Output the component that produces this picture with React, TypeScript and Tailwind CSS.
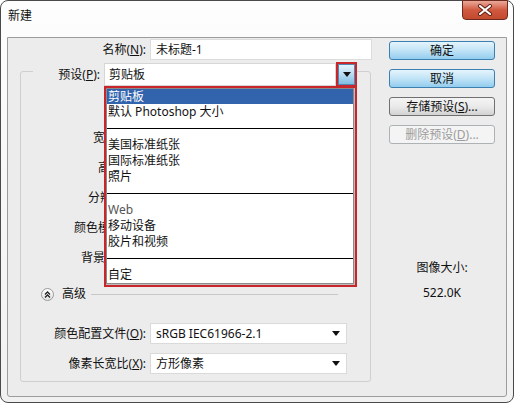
import React from "react";

const Tri = () => (
  <svg width="8" height="5" viewBox="0 0 8 5" className="block">
    <path d="M0 0 H8 L4 5 Z" fill="#111" />
  </svg>
);

const Sel = ({ text, w }: { text: string; w: string }) => (
  <div className={`${w} h-[21px] bg-white border border-[#dadada] flex items-center pl-[5px] pr-[6px]`}>
    <span className="flex-1">{text}</span>
    <Tri />
  </div>
);

const Sep = () => (
  <div className="h-[17px] flex items-center">
    <div className="w-full h-px bg-black" />
  </div>
);

const hidden = [
  { t: "宽度(W):", pl: "pl-[72px]" },
  { t: "高度(H):", pl: "pl-[77px]" },
  { t: "分辨率(R):", pl: "pl-[67px]" },
  { t: "颜色模式(M):", pl: "pl-[53px]" },
  { t: "背景内容(C):", pl: "pl-[60px]" },
];

export default function App() {
  return (
    <div className="w-[515px] h-[404px] bg-white font-['Noto_Sans','Noto_Sans_CJK_SC',sans-serif] text-[12px] leading-[16px] text-[#111]">
      <div className="w-[514px] h-[403px] rounded-[8px] border border-[#4a4a4a] bg-gradient-to-b from-[#fdfdfd] to-[#f1f1f1] flex flex-col">
        {/* title bar */}
        <div className="h-[36px] flex items-start">
          <div className="pl-[7px] pt-[7px] text-[12px]">新建</div>
          <div className="ml-auto mr-[5px] -mt-px w-[46px] h-[20px] rounded-b-[4px] border border-[#6e2a1e] bg-gradient-to-b from-[#e9a89a] via-[#d0583f] to-[#c24a2e] flex items-center justify-center">
            <svg width="16" height="12" viewBox="0 0 16 12">
              <path d="M3 2 L13 10 M13 2 L3 10" stroke="#5a1b10" strokeWidth="4" strokeLinecap="round" />
              <path d="M3 2 L13 10 M13 2 L3 10" stroke="#ffffff" strokeWidth="2.2" strokeLinecap="round" />
            </svg>
          </div>
        </div>
        {/* client */}
        <div className="mx-[6px] h-[360px] border border-[#9c9c9c] rounded-b-[3px] bg-[#ececec] flex">
          {/* left */}
          <div className="w-[381px] flex flex-col">
            <div className="mt-[1px] h-[21px] flex items-center">
              <div className="w-[138px] text-right">
                名称(<span className="underline">N</span>):
              </div>
              <div className="ml-[4px] w-[222px] h-[21px] bg-white border border-[#dcdcdc] flex items-center pl-[5px]">
                未标题-1
              </div>
            </div>
            {/* group box */}
            <div className="ml-[12px] mt-[11px] w-[351px] h-[311px] border border-[#cfcfcf] rounded-[3px] flex flex-col">
              <div className="-mt-[9px] ml-[12px] w-[324px] h-[23px] bg-[#ececec] flex items-center">
                <div className="w-[67px] text-right">
                  预设(<span className="underline">P</span>):
                </div>
                <div className="ml-[4px] relative w-[253px] h-[23px] flex">
                  <div className="w-[232px] h-[23px] bg-white border border-[#d6d6d6] flex items-center pl-[4px]">
                    剪贴板
                  </div>
                  <div className="w-[21px] h-[25px] -mt-px border-2 border-[#c8262a] flex">
                    <div className="flex-1 bg-gradient-to-b from-[#e3f2fb] via-[#b7dcf1] to-[#7fbde2] border border-[#4f89b3] flex items-center justify-center">
                      <Tri />
                    </div>
                  </div>
                  {/* popup list */}
                  <div className="absolute z-10 left-0 top-[23px] w-[253px] border-2 border-[#c8262a] bg-[#bdbdbd] pr-px pb-px">
                    <div className="bg-white border border-[#8a8a8a] flex flex-col">
                      <div className="h-[15px] bg-[#3264ad] text-white pl-[1px] flex items-center">剪贴板</div>
                      <div className="h-[16px] pl-[1px] flex items-center">默认 Photoshop 大小</div>
                      <Sep />
                      <div className="h-[16px] pl-[1px] flex items-center">美国标准纸张</div>
                      <div className="h-[16px] pl-[1px] flex items-center">国际标准纸张</div>
                      <div className="h-[16px] pl-[1px] flex items-center">照片</div>
                      <Sep />
                      <div className="h-[16px] pl-[1px] flex items-center text-[#555]">Web</div>
                      <div className="h-[16px] pl-[1px] flex items-center">移动设备</div>
                      <div className="h-[16px] pl-[1px] flex items-center">胶片和视频</div>
                      <Sep />
                      <div className="h-[16px] pl-[1px] flex items-center">自定</div>
                    </div>
                  </div>
                </div>
              </div>
              {/* hidden rows */}
              <div className="mt-[37px] flex flex-col">
                {hidden.map((r) => (
                  <div key={r.t} className={`h-[30px] flex items-center ${r.pl}`}>
                    <div>{r.t}</div>
                  </div>
                ))}
              </div>
              {/* advanced */}
              <div className="mt-[14px] h-[14px] flex items-center">
                <div className="ml-[20px] w-[13px] h-[13px] rounded-full border border-[#9a9a9a] bg-gradient-to-b from-white to-[#e2e2e2] flex items-center justify-center">
                  <svg width="7" height="7" viewBox="0 0 7 7">
                    <path d="M1 3.5 L3.5 1 L6 3.5 M1 6.5 L3.5 4 L6 6.5" stroke="#222" strokeWidth="1.3" fill="none" />
                  </svg>
                </div>
                <div className="ml-[8px]">高级</div>
                <div className="ml-[5px] w-[247px] h-px bg-[#c8c8c8]" />
              </div>
              <div className="mt-[22px] h-[21px] flex items-center">
                <div className="w-[125px] text-right">
                  颜色配置文件(<span className="underline">O</span>):
                </div>
                <div className="ml-[4px]">
                  <Sel text="sRGB IEC61966-2.1" w="w-[197px]" />
                </div>
              </div>
              <div className="mt-[9px] h-[21px] flex items-center">
                <div className="w-[125px] text-right">
                  像素长宽比(<span className="underline">X</span>):
                </div>
                <div className="ml-[4px]">
                  <Sel text="方形像素" w="w-[197px]" />
                </div>
              </div>
            </div>
          </div>
          {/* right */}
          <div className="w-[106px] pt-[3px] flex flex-col">
            <div className="flex flex-col gap-[9px]">
              <div className="h-[19px] rounded-[3px] border border-[#3c7fb1] bg-gradient-to-b from-[#e6f5fd] via-[#c0e3f6] to-[#93cdee] flex items-center justify-center">确定</div>
              <div className="h-[19px] rounded-[3px] border border-[#3c7fb1] bg-gradient-to-b from-[#e6f5fd] via-[#c0e3f6] to-[#93cdee] flex items-center justify-center">取消</div>
              <div className="h-[19px] rounded-[3px] border border-[#707070] bg-gradient-to-b from-[#f4f4f4] via-[#eaeaea] to-[#d2d2d2] flex items-center justify-center">
                存储预设(<span className="underline">S</span>)...
              </div>
              <div className="h-[19px] rounded-[3px] border border-[#adb2b5] bg-[#f4f4f4] text-[#9c9c9c] flex items-center justify-center">
                删除预设(<span className="underline">D</span>)...
              </div>
            </div>
            <div className="mt-[116px] text-center">图像大小:</div>
            <div className="mt-[9px] text-center">522.0K</div>
          </div>
        </div>
      </div>
    </div>
  );
}
